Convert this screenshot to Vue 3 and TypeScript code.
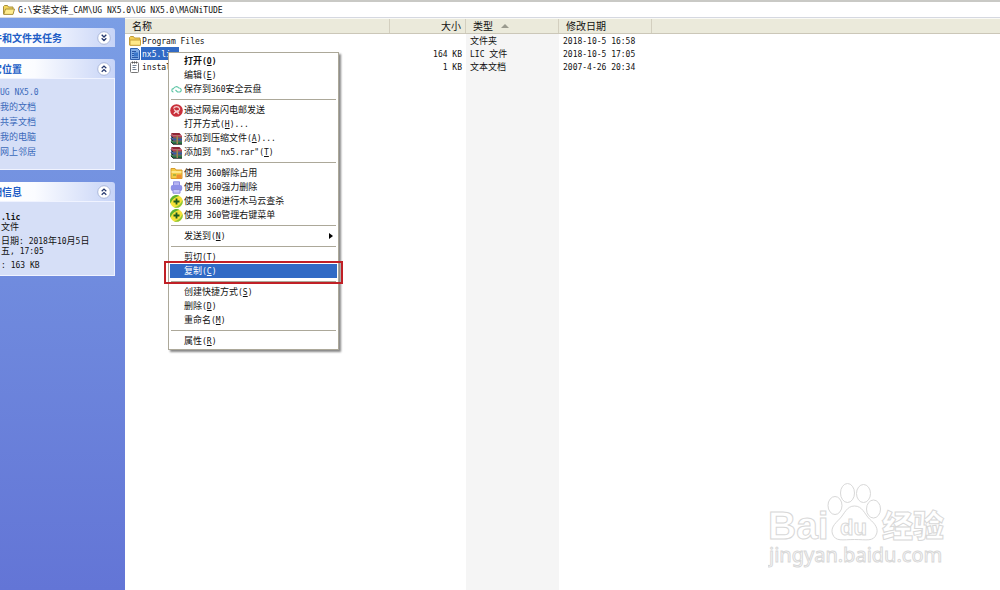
<script setup lang="ts">
import { h, ref, type FunctionalComponent } from 'vue'

/* Renders a label: ASCII runs in the narrow face, "&X" as an underlined access key. */
const Txt: FunctionalComponent<{ t: string }> = (props) =>
  h(
    'span',
    { class: 'txt' },
    (props.t.match(/&.|[\x20-\x25\x27-\x7e]+|[^\x20-\x7e]+/g) ?? []).map((run) =>
      run[0] === '&'
        ? h('u', { class: 'latin' }, run.slice(1))
        : /^[\x20-\x7e]/.test(run)
          ? h('span', { class: 'latin' }, run)
          : run,
    ),
  )
Txt.props = ['t']

interface FileRow { name: string; size: string; type: string; date: string; icon: string }
const files: FileRow[] = [
  { name: 'Program Files', size: '', type: '文件夹', date: '2018-10-5 16:58', icon: 'folder' },
  { name: 'nx5.lic', size: '164 KB', type: 'LIC 文件', date: '2018-10-5 17:05', icon: 'lic' },
  { name: 'instal', size: '1 KB', type: '文本文档', date: '2007-4-26 20:34', icon: 'text' },
]
const selected = ref('nx5.lic')

interface Item { label: string; icon?: string; bold?: boolean; sub?: boolean }
const groups: Item[][] = [
  [{ label: '打开(&O)', bold: true }, { label: '编辑(&E)' }, { label: '保存到360安全云盘', icon: 'cloud' }],
  [
    { label: '通过网易闪电邮发送', icon: 'mail' },
    { label: '打开方式(&H)...' },
    { label: '添加到压缩文件(&A)...', icon: 'rar' },
    { label: '添加到 "nx5.rar"(&T)', icon: 'rar' },
  ],
  [
    { label: '使用 360解除占用', icon: 'unlock' },
    { label: '使用 360强力删除', icon: 'shred' },
    { label: '使用 360进行木马云查杀', icon: 'safe' },
    { label: '使用 360管理右键菜单', icon: 'safe' },
  ],
  [{ label: '发送到(&N)', sub: true }],
  [{ label: '剪切(&T)' }, { label: '复制(&C)' }],
  [{ label: '创建快捷方式(&S)' }, { label: '删除(&D)' }, { label: '重命名(&M)' }],
  [{ label: '属性(&R)' }],
]
const active = ref('复制(&C)')
const places = ['UG NX5.0', '我的文档', '共享文档', '我的电脑', '网上邻居']
</script>

<template>
  <div class="window">
    <header class="address">
      <svg class="ico" viewBox="0 0 12 12"><path d="M.5 10V2.5l1-1h3l1 1.5H10v2" fill="#f5d65b" stroke="#a8903c" /><path d="M.7 10.4 2.5 5H11.5L10 10.4z" fill="#ffec8c" stroke="#a8903c" /></svg>
      <Txt t="G:\安装文件_CAM\UG NX5.0\UG NX5.0\MAGNiTUDE" />
    </header>

    <div class="body">
      <aside class="side">
        <section class="panel">
          <button class="head" type="button"><span>件和文件夹任务</span>
            <svg class="chev" viewBox="0 0 14 14"><circle cx="7" cy="7" r="6.3" fill="#fff" stroke="#a9b7da" /><path d="M4.7 3.8 7 6l2.3-2.2M4.7 7.3 7 9.5l2.3-2.2" fill="none" stroke="#26396f" stroke-width="1.3" /></svg>
          </button>
        </section>
        <section class="panel">
          <button class="head" type="button"><span>它位置</span>
            <svg class="chev" viewBox="0 0 14 14"><circle cx="7" cy="7" r="6.3" fill="#fff" stroke="#a9b7da" /><path d="M4.7 6.3 7 4.1l2.3 2.2M4.7 9.8 7 7.6l2.3 2.2" fill="none" stroke="#26396f" stroke-width="1.3" /></svg>
          </button>
          <nav class="content links">
            <a v-for="p in places" :key="p" href="#"><Txt :t="p" /></a>
          </nav>
        </section>
        <section class="panel">
          <button class="head" type="button"><span>细信息</span>
            <svg class="chev" viewBox="0 0 14 14"><circle cx="7" cy="7" r="6.3" fill="#fff" stroke="#a9b7da" /><path d="M4.7 6.3 7 4.1l2.3 2.2M4.7 9.8 7 7.6l2.3 2.2" fill="none" stroke="#26396f" stroke-width="1.3" /></svg>
          </button>
          <div class="content details">
            <p><b><Txt t=".lic" /></b><br><Txt t="文件" /></p>
            <p><Txt t="日期: 2018年10月5日" /><br><Txt t="五, 17:05" /></p>
            <p><Txt t=": 163 KB" /></p>
          </div>
        </section>
      </aside>

      <main class="list">
        <table>
          <colgroup><col class="c-name"><col class="c-size"><col class="c-type"><col class="c-date"><col></colgroup>
          <thead>
            <tr>
              <th>名称</th><th class="num">大小</th>
              <th>类型<svg class="sort" viewBox="0 0 8 4"><path d="M0 4 4 0l4 4z" fill="#9a9a8e" /></svg></th>
              <th>修改日期</th><th></th>
            </tr>
          </thead>
          <tbody>
            <tr v-for="f in files" :key="f.name" @click="selected = f.name">
              <td>
                <span class="file" :class="{ selected: selected === f.name }">
                  <svg v-if="f.icon === 'folder'" class="ico" viewBox="0 0 12 12"><path d="M.5 10V2.5l1-1h3l1 1.5H11V10z" fill="#f3ce55" stroke="#c09a35" /><path d="M1 10.3V5H11.5V10.3z" fill="#ffe98a" stroke="#c8a23c" /></svg>
                  <svg v-else-if="f.icon === 'lic'" class="ico" viewBox="0 0 12 12"><path d="M1.5.5h7l2 2v9h-9z" fill="#7fabe6" stroke="#2d5fae" /><path d="M3 3.5h4M3 5.5h6M3 7.5h5M3 9.5h6" stroke="#2857a5" /><path d="M5 4.500h4v4H5z" fill="#3b78cb" /></svg>
                  <svg v-else class="ico" viewBox="0 0 12 12"><rect x="1.5" y="1.5" width="8" height="10" rx="1" fill="#fff" stroke="#777" /><path d="M3 1.5h6" stroke="#555" stroke-dasharray="1 1" stroke-width="2" /><path d="M3.5 4.5h4M3.5 6.5h3M3.5 8.5h4" stroke="#6e7f92" /></svg>
                  <span class="fname"><Txt :t="f.name" /></span>
                </span>
              </td>
              <td class="num"><Txt :t="f.size" /></td>
              <td><Txt :t="f.type" /></td>
              <td><Txt :t="f.date" /></td>
              <td></td>
            </tr>
          </tbody>
        </table>
      </main>
    </div>

    <div class="menu" role="menu">
      <div v-for="(g, i) in groups" :key="i" class="group">
        <button
          v-for="m in g" :key="m.label" type="button" role="menuitem" class="item"
          :class="{ bold: m.bold, active: active === m.label }" @mouseenter="active = m.label"
        >
          <span class="slot">
            <svg v-if="m.icon === 'cloud'" viewBox="0 0 13 13"><path d="M3.5 9a1.700 1.700 0 0 1 0-3.400 3 3 0 0 1 5.300-.6 2 2 0 0 1 .7 4H7.500L5.500 7" fill="none" stroke="#5cc5a5" stroke-width="1.1" /></svg>
            <svg v-else-if="m.icon === 'mail'" viewBox="0 0 13 13"><circle cx="6.500" cy="6.500" r="6.300" fill="#c9303b" /><path d="M3.5 4.500c1-2.500 5-2.500 6 0s-3 2-4.500 3.500M4 5.500l5 4.500M4 10c0-2 4-3 5-2" fill="none" stroke="#f6cfcf" stroke-width="1.2" /></svg>
            <svg v-else-if="m.icon === 'rar'" viewBox="0 0 13 13"><path d="M1 1h8.500l2 2.500H3z" fill="#8e2735" /><path d="M1 1.500v1.800L3 5.500h9v-2H3z" fill="#b94054" /><path d="M1 4.500v2L3 8.500h9v-2H3z" fill="#3558a8" /><path d="M1 7.500v2L3 12h9V9.500H3z" fill="#2b7d4a" /><path d="M1 3.500 3 6h9M1 6.500 3 9h9M1 9.800 3 12.200h9" fill="none" stroke="#171717" /><path d="M6.500 3.500h1.500v8.500H6.500z" fill="#a08850" /></svg>
            <svg v-else-if="m.icon === 'unlock'" viewBox="0 0 13 13"><path d="M1 11.500V1.500h4l1 1.500h6v8.500z" fill="#f4cb45" stroke="#d79b2a" /><path d="M1.500 5h10" stroke="#fff0a0" stroke-width="1.5" /><path d="M6.500 7.500h5v4h-5z" fill="#ef8e30" /><path d="M3 8h3" stroke="#719a35" /></svg>
            <svg v-else-if="m.icon === 'shred'" viewBox="0 0 13 13"><path d="M3.500.8h6V5h-6z" fill="#b5b3f2" stroke="#8c8ce0" /><rect x=".8" y="4" width="11.4" height="6" rx="2" fill="#8e90e8" /><path d="M3 8.500h7v3.700H3z" fill="#c6c6fa" stroke="#8e8edb" /></svg>
            <svg v-else-if="m.icon === 'safe'" viewBox="0 0 13 13"><circle cx="6.500" cy="6.500" r="6.300" fill="#f4e23a" /><path d="M.5 8.500A6.200 6.200 0 0 1 9.500 1C6 1.500 2 4 .5 8.500z" fill="#5fb331" /><path d="M12.500 5A6.200 6.200 0 0 1 4 12.200c4-.5 7-3 8.500-7.200z" fill="#8ac638" /><path d="M6.500 3.500v6M3.500 6.500h6" stroke="#1d5a20" stroke-width="1.8" /></svg>
          </span>
          <Txt :t="m.label" />
          <svg v-if="m.sub" class="arrow" viewBox="0 0 4 6"><path d="M0 0l4 3-4 3z" /></svg>
        </button>
      </div>
    </div>
    <div class="marker"></div>

    <svg class="watermark" viewBox="0 0 190 90" fill="#fff" stroke="#d8d8d8" stroke-width="1">
      <text x="0" y="56" font-size="39" font-weight="700" class="wm">Bai</text>
      <ellipse cx="67" cy="22.500" rx="7" ry="9" /><ellipse cx="79.500" cy="10" rx="7" ry="9.500" /><ellipse cx="95.500" cy="10.500" rx="7" ry="9" /><ellipse cx="105.500" cy="26" rx="7" ry="9" />
      <path d="M86.500 23c8 0 10 8 15 13 6 5 9 10 7 15-3 8-10 5.500-22 5.500s-19 2.500-22-5.500c-2-6 2-10 7-15 5-5 7-13 15-13z" />
      <text x="72" y="52" font-size="22" font-weight="700" class="wm">du</text>
      <text x="114" y="54" font-size="31" font-weight="900" class="wm">经验</text>
      <text x="1" y="79" font-size="20" class="wm url">jingyan.baidu.com</text>
    </svg>
  </div>
</template>

<style>
body { margin: 0; background: #fff; }
</style>

<style scoped>
.window {
  position: relative;
  display: flex;
  flex-direction: column;
  min-height: 100vh;
  overflow: hidden;
  font: 9px/14px "Noto Sans CJK SC", sans-serif;
  color: #111;
}
button { font: inherit; color: inherit; border: 0; padding: 0; margin: 0; background: none; text-align: left; }
.txt { white-space: pre; }
:deep(.latin) { font-family: "DejaVu Sans Mono", monospace; font-size: 8px; line-height: 1; }
.ico { width: 12px; height: 12px; flex: none; }
.address {
  display: flex;
  align-items: center;
  gap: 3px;
  height: 15px;
  padding: 0 3px;
  border-top: 2px solid #c9c9c5;
  border-bottom: 1px solid #d5d8e0;
}
.body { display: flex; flex: 1; }
.side {
  flex: none;
  width: 125px;
  box-sizing: border-box;
  padding: 10px 10px 0 0;
  background: linear-gradient(#7b9ee5, #6375d6);
  display: flex;
  flex-direction: column;
  gap: 12px;
}
.head {
  display: flex;
  align-items: center;
  justify-content: space-between;
  width: 100%;
  height: 19px;
  padding-right: 4px;
  border-radius: 0 3px 0 0;
  background: linear-gradient(90deg, #fff, #fbfcff 30%, #c7d4f7);
  color: #215dc6;
  font-size: 10px;
  font-weight: 700;
  text-indent: -8px;
}
.chev { width: 14px; height: 14px; }
.content { border: 1px solid #f0f3ff; border-left: 0; background: #d6dff7; }
.links { display: flex; flex-direction: column; padding: 5px 0 10px; }
.links a { color: #3a69ba; text-decoration: none; line-height: 15px; white-space: nowrap; }
.details { padding: 10px 0 5px; line-height: 10px; }
.details p { margin: 0 0 4px 1px; white-space: nowrap; }
.details p:last-child { margin-bottom: 0; }
.list {
  flex: 1;
  min-width: 0;
  background: linear-gradient(90deg, #fff 341px, #f5f5f5 341px, #f5f5f5 434px, #fff 434px);
}
table { width: 100%; table-layout: fixed; border-collapse: collapse; }
.c-name { width: 265px; }
.c-size { width: 76px; }
.c-type { width: 93px; }
.c-date { width: 93px; }
th {
  height: 14px;
  padding: 0 7px;
  background: #ebeadb;
  border-top: 1px solid #fafaf5;
  border-bottom: 1px solid #cbc7b8;
  box-shadow: inset -1px 0 #d3cfbf;
  text-align: left;
  font-size: 10px;
  font-weight: 400;
  line-height: 12px;
}
th:last-child { box-shadow: none; }
th.num { padding-right: 5px; }
td { height: 13px; padding: 0 4px; line-height: 13px; white-space: nowrap; }
.num { text-align: right; }
.sort { width: 8px; height: 4px; margin-left: 8px; vertical-align: 2px; }
.file { display: flex; align-items: center; }
.fname { padding: 0 3px 0 1px; }
.selected .fname { background: #316ac5; color: #fff; }
.menu {
  position: absolute;
  left: 168px;
  top: 52px;
  width: 167px;
  padding: 1px;
  border: 1px solid #aca899;
  background: #fff;
  box-shadow: 2px 2px 2px #888;
}
.group + .group::before { content: ""; display: block; margin: 3px 1px; border-top: 1px solid #aca899; }
.item { display: flex; align-items: center; width: 100%; height: 14px; line-height: 14px; }
.slot { width: 14px; flex: none; display: flex; }
.slot svg { width: 13px; height: 13px; }
.bold { font-weight: 700; }
.active { background: #316ac5; color: #fff; }
.arrow { width: 4px; height: 6px; margin-left: auto; margin-right: 4px; }
.marker { position: absolute; left: 164px; top: 261px; width: 175px; height: 19px; border: 2px solid #c02026; }
.watermark { position: absolute; right: 42px; bottom: 17px; width: 190px; height: 90px; }
.wm { font-family: "Liberation Sans", "Noto Sans CJK SC", sans-serif; }
.url { font-family: "Noto Sans", sans-serif; }
</style>
